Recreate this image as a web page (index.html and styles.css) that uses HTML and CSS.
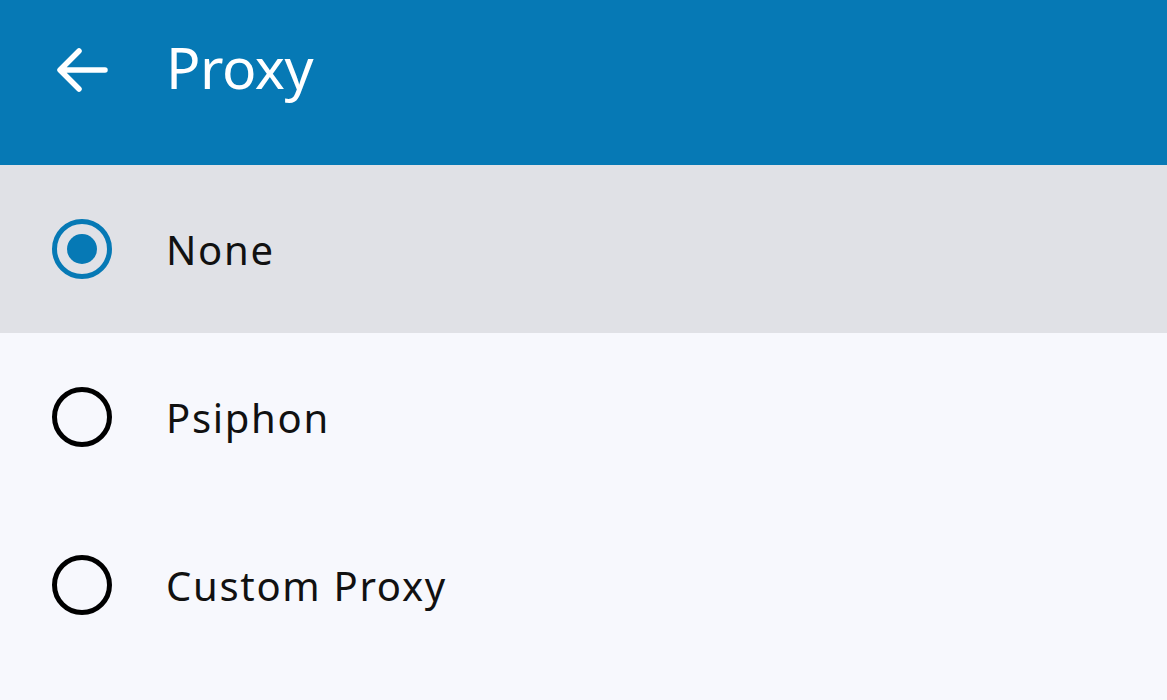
FILE: index.html
```html
<!DOCTYPE html>
<html lang="en">
<head>
    <meta charset="UTF-8">
    <title>Proxy</title>
    <link rel="stylesheet" href="styles.css">
</head>
<body>
    <header class="topbar">
        <div class="back">
            <svg width="52" height="44" viewBox="0 0 52 44">
                <path d="M49 22H5M23 3L4 22l19 19" fill="none" stroke="white" stroke-width="5.5" stroke-linecap="round" stroke-linejoin="round"/>
            </svg>
        </div>
        <h1 class="title">Proxy</h1>
    </header>
    <div class="list">
        <div class="row selected">
            <div class="radio checked"><span class="dot"></span></div>
            <span class="label">None</span>
        </div>
        <div class="row">
            <div class="radio"></div>
            <span class="label">Psiphon</span>
        </div>
        <div class="row">
            <div class="radio"></div>
            <span class="label">Custom Proxy</span>
        </div>
    </div>
</body>
</html>
```

FILE: styles.css
```css
body {
    margin: 0;
    font-family: "Noto Sans", "Open Sans", sans-serif;
    background-color: #f7f8fd;
}
.topbar {
    box-sizing: border-box;
    background-color: #0679b5;
    height: 165px;
    padding-bottom: 26px;
    display: flex;
    align-items: center;
    color: white;
}
.back {
    width: 164px;
    display: flex;
    justify-content: center;
    align-items: center;
}
.title {
    margin: 0;
    font-size: 57px;
    font-weight: 400;
    letter-spacing: -0.5px;
    margin-left: 2px;
    margin-top: -6px;
}
.row {
    height: 168px;
    display: flex;
    align-items: center;
}
.row.selected {
    background-color: #e0e1e6;
}
.radio {
    box-sizing: border-box;
    width: 60px;
    height: 60px;
    border: 5px solid black;
    border-radius: 50%;
    margin-left: 52px;
    margin-right: 54px;
    display: flex;
    justify-content: center;
    align-items: center;
}
.radio.checked {
    border-color: #0679b5;
}
.dot {
    width: 30px;
    height: 30px;
    border-radius: 50%;
    background-color: #0679b5;
}
.label {
    font-size: 40px;
    letter-spacing: 1.7px;
    color: #111;
}
```
